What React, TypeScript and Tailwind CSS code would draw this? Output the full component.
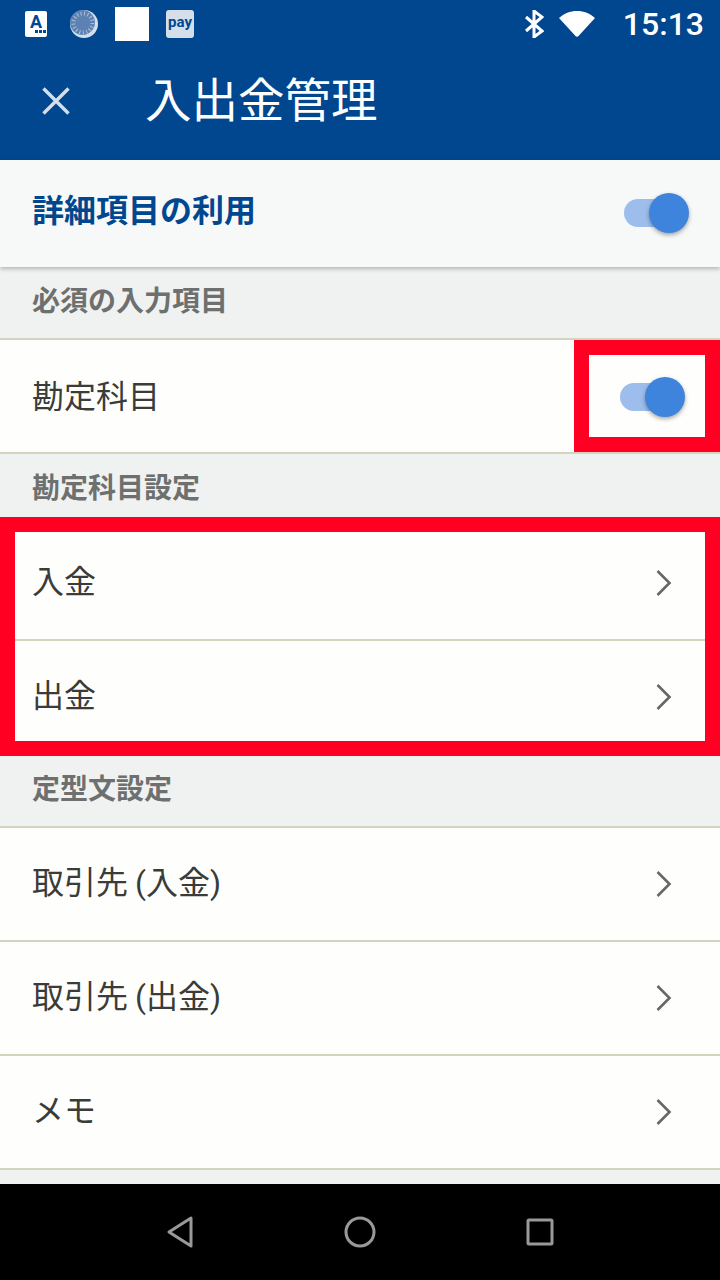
import * as React from 'react'

const FONT = "font-['Roboto','Noto_Sans_CJK_JP',sans-serif]"

function CloseIcon(): React.JSX.Element {
  return (
    <svg width="28" height="28" viewBox="0 0 28 28" fill="none" stroke="#d5dfea" strokeWidth={3.4}>
      <path d="M1.5 1.5l25 25M26.5 1.5l-25 25" />
    </svg>
  )
}

function ChevronIcon(): React.JSX.Element {
  return (
    <svg width="18" height="28" viewBox="0 0 18 28" fill="none" stroke="#666866" strokeWidth={2.6}>
      <path d="M2.5 2l12 12-12 12" />
    </svg>
  )
}

function StatusIcons(): React.JSX.Element {
  return (
    <div className="flex items-center">
      <div className="ml-[25px] flex h-[26px] w-[22px] flex-col items-center rounded-[2px] bg-white">
        <span className="mt-[2px] text-[18px] leading-[17px] font-bold text-[#00478f]">A</span>
        <div className="flex gap-[1px] self-end pr-[1px]">
          <div className="h-[3px] w-[3px] bg-[#00478f]" />
          <div className="h-[3px] w-[3px] bg-[#00478f]" />
          <div className="h-[3px] w-[3px] bg-[#00478f]" />
        </div>
      </div>
      <svg className="ml-[23px]" width="28" height="28" viewBox="0 0 28 28">
        <circle cx="14" cy="14" r="14" fill="#d5dfea" />
        <circle cx="12.5" cy="12.5" r="12.500" fill="#5c82b4" />
        <circle cx="13" cy="13" r="9.5" fill="none" stroke="#a9bdd8" strokeWidth={4} strokeDasharray="1 2.5" />
      </svg>
      <div className="ml-[17px] h-[34px] w-[34px] bg-white" />
      <div className="ml-[17px] flex h-[28px] w-[28px] items-center justify-center rounded-[3px] bg-[#d5dfea] pb-[3px] text-[15px] leading-none font-bold text-[#00478f]">
        pay
      </div>
    </div>
  )
}

function Toggle(): React.JSX.Element {
  return (
    <div className="relative h-[28px] w-[65px]">
      <div className="h-[28px] w-[50px] rounded-full bg-[#9dbeec]" />
      <div className="absolute top-[-6px] right-0 h-[40px] w-[40px] rounded-full bg-[#3f84dc] shadow-[0_2px_4px_rgba(0,0,0,0.35)]" />
    </div>
  )
}

function SectionHeader({ label, className }: { label: string; className: string }): React.JSX.Element {
  return (
    <div className={`flex items-center bg-[#f0f2f1] px-[32px] text-[28px] leading-none font-bold text-[#6d706e] ${className}`}>
      {label}
    </div>
  )
}

function LinkRow({ label, className }: { label: string; className: string }): React.JSX.Element {
  return (
    <div className={`flex items-center justify-between bg-[#fefffd] pl-[32px] pr-[47px] text-[32px] leading-none text-[#3a3c3a] ${className}`}>
      <span className="pb-[2px] [word-spacing:-1px]">{label}</span>
      <ChevronIcon />
    </div>
  )
}

export default function App(): React.JSX.Element {
  return (
    <div className={`flex h-[1280px] w-[720px] flex-col overflow-hidden bg-[#f0f2f1] ${FONT}`}>
      <header className="bg-[#00478f] text-white">
        <div className="flex h-[48px] items-center justify-between">
          <StatusIcons />
          <div className="flex items-center">
            <svg width="20" height="28" viewBox="0 0 20 28" fill="none" stroke="white" strokeWidth={3}>
              <path d="M2 7l16 14-8 6V1l8 6L2 21" />
            </svg>
            <svg className="ml-[15px]" width="36" height="26" viewBox="0 0 36 26">
              <path d="M0 7C5 2.500 11 0 18 0s13 2.500 18 7L19.500 25c-.8 1-2.200 1-3 0z" fill="white" />
            </svg>
            <span className="mr-[16px] ml-[28px] text-[32px] leading-none font-medium">15:13</span>
          </div>
        </div>
        <div className="flex h-[112px] items-center pb-[6px]">
          <div className="ml-[42px]">
            <CloseIcon />
          </div>
          <h1 className="ml-[75px] text-[46.5px] leading-none font-normal">入出金管理</h1>
        </div>
      </header>

      <div className="relative flex h-[107px] items-center justify-between bg-[#f7f8f8] pr-[31px] pl-[32px] shadow-[0_2px_4px_rgba(0,0,0,0.25)]">
        <span className="pb-[5px] text-[32px] leading-none font-bold text-[#00478f]">詳細項目の利用</span>
        <div className="pb-[2px]">
          <Toggle />
        </div>
      </div>

      <SectionHeader label="必須の入力項目" className="h-[73px] border-b-2 border-[#d2d4be] pb-[2px]" />

      <div className="flex h-[114px] items-center justify-between border-b-2 border-[#d2d4be] bg-[#fefffd] pl-[32px] text-[32px] leading-none text-[#3a3c3a]">
        <span className="pt-[1px]">勘定科目</span>
        <div className="flex h-[112px] w-[146px] items-center justify-end border-[15px] border-[#ff0022] bg-[#fefffd] pt-[2px] pr-[20px]">
          <Toggle />
        </div>
      </div>

      <SectionHeader label="勘定科目設定" className="h-[63px] pt-[6px]" />

      <div className="border-[15px] border-[#ff0022]">
        <div className="flex h-[109px] items-center justify-between border-b-2 border-[#d2d4be] bg-[#fefffd] pr-[32px] pb-[5px] pl-[17px] text-[32px] leading-none text-[#3a3c3a]">
          <span className="pb-[2px]">入金</span>
          <ChevronIcon />
        </div>
        <div className="flex h-[100px] items-center justify-between bg-[#fefffd] pt-[12px] pr-[32px] pl-[17px] text-[32px] leading-none text-[#3a3c3a]">
          <span className="pb-[2px]">出金</span>
          <ChevronIcon />
        </div>
      </div>

      <SectionHeader label="定型文設定" className="h-[72px] border-b-2 border-[#d2d4be] pb-[2px]" />
      <LinkRow label="取引先 (入金)" className="h-[114px] border-b-2 border-[#d2d4be]" />
      <LinkRow label="取引先 (出金)" className="h-[114px] border-b-2 border-[#d2d4be]" />
      <LinkRow label="メモ" className="h-[114px] border-b-2 border-[#d2d4be]" />

      <div className="h-[14px] bg-[#f0f2f1]" />

      <nav className="relative flex h-[96px] items-center bg-black">
        <svg className="ml-[166px]" width="28" height="32" viewBox="0 0 28 32" fill="none" stroke="#989a98" strokeWidth={3} strokeLinejoin="round">
          <path d="M25 2v28L3 16z" />
        </svg>
        <svg className="ml-[150px]" width="32" height="32" viewBox="0 0 32 32" fill="none" stroke="#989a98" strokeWidth={3}>
          <circle cx="16" cy="16" r="14" />
        </svg>
        <svg className="ml-[150px]" width="28" height="28" viewBox="0 0 28 28" fill="none" stroke="#989a98" strokeWidth={3} strokeLinejoin="round">
          <rect x="2" y="2" width="24" height="24" rx="1" />
        </svg>
      </nav>
    </div>
  )
}
